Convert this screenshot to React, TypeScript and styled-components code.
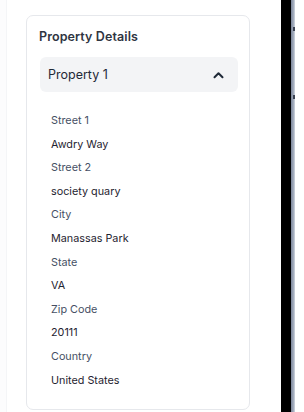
import React from "react";
import styled, { createGlobalStyle } from "styled-components";

const Global = createGlobalStyle`
  html, body { margin: 0; padding: 0; background: #ffffff; }
  body { font-family: Inter, "Noto Sans", Arial, sans-serif; }
`;

const Page = styled.div`
  display: flex;
  width: 304px;
  height: 412px;
  overflow: hidden;
  background: #ffffff;
`;

const Gutter = styled.div`
  width: 6px;
  flex: none;
  background: #fcfcfd;
  border-right: 1px solid #f4f5f7;
`;

const Main = styled.div`
  width: 243px;
  flex: none;
  padding: 15px 0 0 19px;
  box-sizing: border-box;
`;

const Card = styled.section`
  height: 395px;
  box-sizing: border-box;
  border: 1px solid #e6e8ec;
  border-radius: 7px;
  padding: 12px 11px 0 12px;
  display: flex;
  flex-direction: column;
`;

const Title = styled.h2`
  margin: 0 0 11px 0;
  font-size: 12.5px;
  line-height: 18px;
  font-weight: 600;
  color: #2f3542;
  letter-spacing: 0.1px;
`;

const AccordionHeader = styled.button`
  all: unset;
  display: flex;
  align-items: center;
  justify-content: space-between;
  height: 35px;
  margin-left: 1px;
  padding: 0 14px 0 8px;
  background: #f3f4f6;
  border-radius: 6px;
  font-family: Inter, "Noto Sans", Arial, sans-serif;
  font-size: 12.5px;
  color: #1f2937;
`;

const List = styled.dl`
  margin: 17px 0 0 12px;
  padding: 0;
  display: flex;
  flex-direction: column;
`;

const Label = styled.dt`
  font-size: 10.8px;
  line-height: 23.6px;
  color: #465064;
`;

const Value = styled.dd`
  margin: 0;
  font-size: 10.8px;
  line-height: 23.6px;
  color: #1f2430;
`;

const Spacer = styled.div`
  width: 31px;
  flex: none;
`;

const FrameEdge = styled.div`
  width: 10px;
  flex: none;
  background: #000000;
`;

const FrameSide = styled.div`
  position: relative;
  width: 4px;
  flex: none;
  background: linear-gradient(to right, #7d879b 0, #a9b2c2 70%, #d6dbe3 100%);
`;

const Button = styled.div<{ $top: number; $h: number }>`
  position: absolute;
  left: 2px;
  top: ${(p) => p.$top}px;
  width: 2px;
  height: ${(p) => p.$h}px;
  background: #3b4252;
`;

const Chevron = () => (
  <svg width="11" height="8" viewBox="0 0 11 8" fill="none">
    <path d="M1.5 6.2 L5.5 2.2 L9.5 6.2" stroke="#1f2937" strokeWidth="2" strokeLinecap="round" strokeLinejoin="round" />
  </svg>
);

const fields: [string, string][] = [
  ["Street 1", "Awdry Way"],
  ["Street 2", "society quary"],
  ["City", "Manassas Park"],
  ["State", "VA"],
  ["Zip Code", "20111"],
  ["Country", "United States"],
];

export default function App() {
  return (
    <Page>
      <Global />
      <Gutter />
      <Main>
        <Card>
          <Title>Property Details</Title>
          <AccordionHeader>
            <span>Property 1</span>
            <Chevron />
          </AccordionHeader>
          <List>
            {fields.map(([k, v]) => (
              <React.Fragment key={k}>
                <Label>{k}</Label>
                <Value>{v}</Value>
              </React.Fragment>
            ))}
          </List>
        </Card>
      </Main>
      <Spacer />
      <FrameEdge />
      <FrameSide>
        <Button $top={27} $h={4} />
        <Button $top={95} $h={4} />
      </FrameSide>
    </Page>
  );
}
